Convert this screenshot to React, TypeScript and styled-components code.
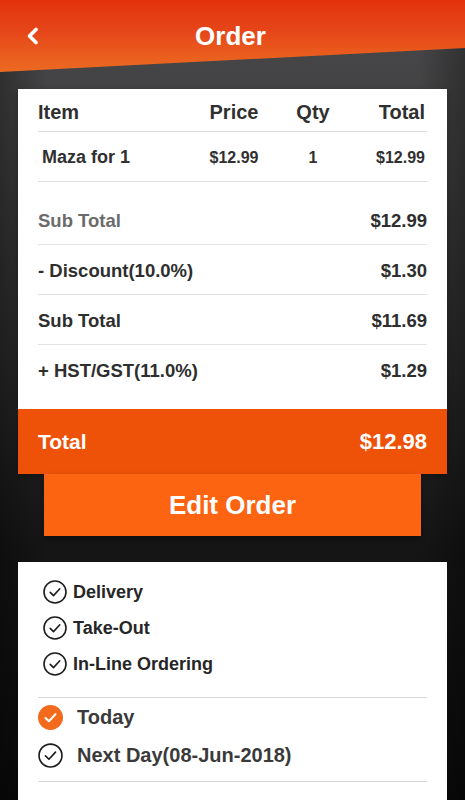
import React from "react";
import styled, { createGlobalStyle } from "styled-components";

const GlobalStyle = createGlobalStyle`
  html, body {
    margin: 0;
    padding: 0;
    background: #0a0a0a;
  }
  * {
    box-sizing: border-box;
  }
`;

const Screen = styled.div`
  width: 465px;
  height: 800px;
  overflow: hidden;
  font-family: "Liberation Sans", Arial, sans-serif;
  background:
    linear-gradient(to right, rgba(0, 0, 0, 0.3), rgba(0, 0, 0, 0) 10%, rgba(0, 0, 0, 0) 90%, rgba(0, 0, 0, 0.3)),
    linear-gradient(to bottom, #4a4a4c 0%, #3c3c3d 22%, #272728 48%, #151515 68%, #0a0a0a 100%);
`;

const Header = styled.header`
  height: 72px;
  display: grid;
  grid-template-columns: 70px 1fr 70px;
  align-items: start;
  padding-top: 20px;
  background: linear-gradient(to bottom, #e3320c 0%, #e6471a 45%, #ea5f1e 80%, #ec6a22 100%);
  clip-path: polygon(0 0, 100% 0, 100% 48px, 0 72px);
`;

const BackButton = styled.button`
  height: 32px;
  padding: 0 0 0 26px;
  margin: 0;
  border: 0;
  background: none;
  display: flex;
  align-items: center;
  cursor: pointer;
`;

const Title = styled.h1`
  margin: 0;
  height: 32px;
  line-height: 32px;
  text-align: center;
  color: #fff;
  font-size: 26px;
  font-weight: 700;
  padding-right: 4px;
`;

const Card = styled.section`
  margin: 17px 18px 0;
  background: #fff;
  box-shadow: 0 2px 6px rgba(0, 0, 0, 0.25);
`;

const CardBody = styled.div`
  padding: 0 20px 14px;
`;

const TableRow = styled.div<{ $head?: boolean }>`
  display: grid;
  grid-template-columns: 1fr 86px 72px 78px;
  align-items: center;
  height: ${(p) => (p.$head ? "43px" : "50px")};
  border-bottom: 1px solid #dedede;
  color: #303030;
  font-weight: 700;
  font-size: ${(p) => (p.$head ? "20px" : "16px")};
  padding-top: ${(p) => (p.$head ? "4px" : "2px")};
`;

const Cell = styled.span<{ $align?: "left" | "center" | "right"; $size?: number; $indent?: number }>`
  text-align: ${(p) => p.$align || "left"};
  font-size: ${(p) => (p.$size ? `${p.$size}px` : "inherit")};
  padding-left: ${(p) => p.$indent || 0}px;
  padding-right: ${(p) => (p.$align === "right" ? 2 : 0)}px;
`;

const Summary = styled.div`
  padding-top: 13px;
`;

const SummaryRow = styled.div<{ $last?: boolean; $muted?: boolean }>`
  height: 50px;
  display: flex;
  justify-content: space-between;
  align-items: center;
  border-bottom: ${(p) => (p.$last ? "0" : "1px solid #e2e2e2")};
  font-size: 18.5px;
  font-weight: 700;
  color: #2e2e2e;
  padding-top: 2px;

  & > span:first-child {
    color: ${(p) => (p.$muted ? "#6b6b6b" : "#2e2e2e")};
  }
`;

const TotalBar = styled.div`
  height: 65px;
  display: flex;
  justify-content: space-between;
  align-items: center;
  padding: 0 20px;
  background: #ee5208;
  color: #fff;
  font-weight: 700;
  font-size: 21px;

  & > span:last-child {
    font-size: 22px;
  }
`;

const EditButton = styled.button`
  display: block;
  width: 377px;
  height: 62px;
  margin: 0 0 0 44px;
  border: 0;
  background: #fc6411;
  color: #fff;
  font-family: "Liberation Sans", Arial, sans-serif;
  font-size: 26px;
  font-weight: 700;
  box-shadow: 0 3px 6px rgba(0, 0, 0, 0.35);
  cursor: pointer;
`;

const OptionsCard = styled.section`
  margin: 26px 18px 0;
  background: #fff;
  padding: 12px 20px 0;
  height: 260px;
`;

const ServiceList = styled.div`
  padding-left: 5px;
  padding-bottom: 15px;
  border-bottom: 1px solid #d8d8d8;
`;

const ServiceRow = styled.label`
  height: 36px;
  display: flex;
  align-items: center;
  gap: 6px;
  font-size: 18px;
  font-weight: 700;
  color: #262626;
`;

const DayList = styled.div`
  padding-bottom: 7px;
  border-bottom: 1px solid #d8d8d8;
`;

const DayRow = styled.label`
  height: 38px;
  display: flex;
  align-items: center;
  gap: 14px;
  font-size: 20px;
  font-weight: 700;
  color: #3a3a3a;
`;

const ChevronLeft = () => (
  <svg width="14" height="18" viewBox="0 0 14 18">
    <polyline
      points="10,2.5 3.5,9 10,15.5"
      fill="none"
      stroke="#fff"
      strokeWidth="3.6"
      strokeLinecap="round"
      strokeLinejoin="round"
    />
  </svg>
);

const CheckCircle = ({ size, filled }: { size: number; filled?: boolean }) => (
  <svg width={size} height={size} viewBox="0 0 24 24">
    <circle
      cx="12"
      cy="12"
      r={filled ? 12 : 11}
      fill={filled ? "#f36a1d" : "none"}
      stroke={filled ? "none" : "#1e1e1e"}
      strokeWidth="1.6"
    />
    <polyline
      points="7.2,12.4 10.5,15.6 16.8,8.8"
      fill="none"
      stroke={filled ? "#fff" : "#1e1e1e"}
      strokeWidth={filled ? 2 : 1.6}
      strokeLinecap="round"
      strokeLinejoin="round"
    />
  </svg>
);

const items = [{ name: "Maza for 1", price: "$12.99", qty: 1, total: "$12.99" }];

const summary = [
  { label: "Sub Total", value: "$12.99", muted: true },
  { label: "- Discount(10.0%)", value: "$1.30" },
  { label: "Sub Total", value: "$11.69" },
  { label: "+ HST/GST(11.0%)", value: "$1.29" },
];

const services = ["Delivery", "Take-Out", "In-Line Ordering"];

const days = [
  { label: "Today", selected: true },
  { label: "Next Day(08-Jun-2018)", selected: false },
];

export default function App() {
  return (
    <Screen>
      <GlobalStyle />
      <Header>
        <BackButton aria-label="Back">
          <ChevronLeft />
        </BackButton>
        <Title>Order</Title>
        <span />
      </Header>

      <Card>
        <CardBody>
          <TableRow $head>
            <Cell>Item</Cell>
            <Cell $align="center">Price</Cell>
            <Cell $align="center">Qty</Cell>
            <Cell $align="right">Total</Cell>
          </TableRow>
          {items.map((it) => (
            <TableRow key={it.name}>
              <Cell $size={18} $indent={4}>
                {it.name}
              </Cell>
              <Cell $align="center">{it.price}</Cell>
              <Cell $align="center">{it.qty}</Cell>
              <Cell $align="right">{it.total}</Cell>
            </TableRow>
          ))}
          <Summary>
            {summary.map((row, i) => (
              <SummaryRow key={i} $muted={row.muted} $last={i === summary.length - 1}>
                <span>{row.label}</span>
                <span>{row.value}</span>
              </SummaryRow>
            ))}
          </Summary>
        </CardBody>
        <TotalBar>
          <span>Total</span>
          <span>$12.98</span>
        </TotalBar>
      </Card>

      <EditButton>Edit Order</EditButton>

      <OptionsCard>
        <ServiceList>
          {services.map((s) => (
            <ServiceRow key={s}>
              <CheckCircle size={24} />
              {s}
            </ServiceRow>
          ))}
        </ServiceList>
        <DayList>
          {days.map((d) => (
            <DayRow key={d.label}>
              <CheckCircle size={25} filled={d.selected} />
              {d.label}
            </DayRow>
          ))}
        </DayList>
      </OptionsCard>
    </Screen>
  );
}
